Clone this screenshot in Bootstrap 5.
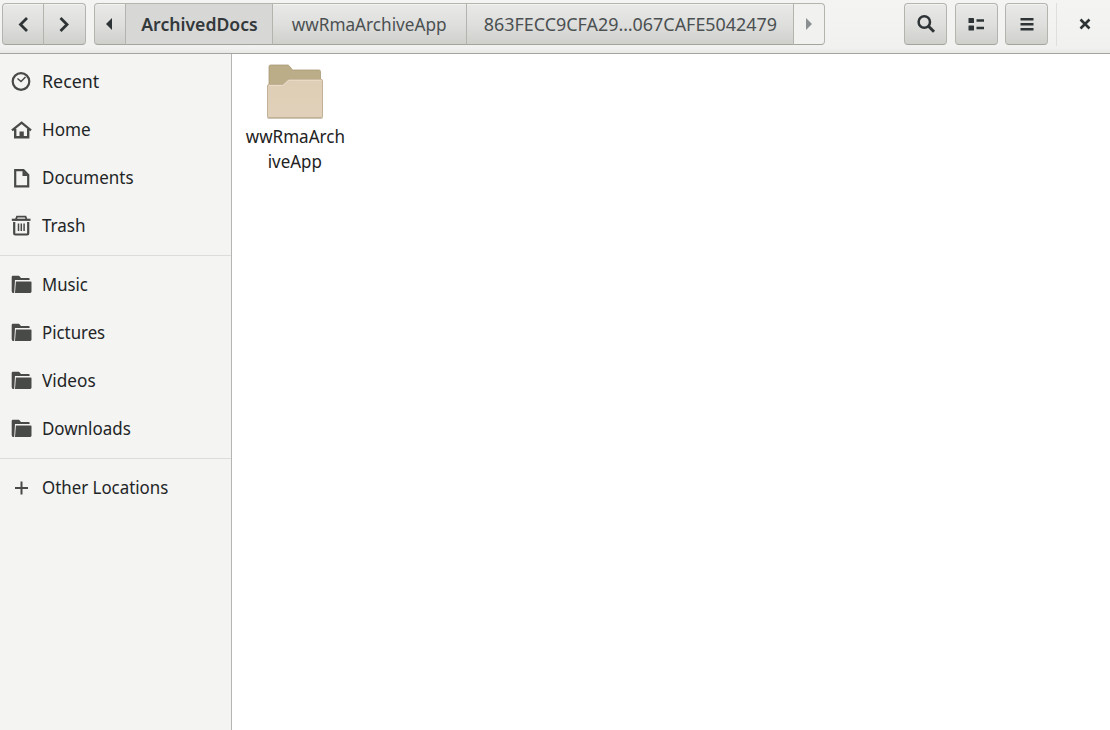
<!DOCTYPE html>
<html lang="en">
<head>
<meta charset="utf-8">
<title>ArchivedDocs</title>
<link href="https://cdn.jsdelivr.net/npm/bootstrap@5.3.0/dist/css/bootstrap.min.css" rel="stylesheet">
<style>
body{font-family:"Noto Sans","Open Sans",sans-serif;font-size:18px;line-height:25px;color:#222527;background:#fff}
.headerbar{height:54px;background:linear-gradient(#f4f4f3,#f1f1f0 48px,#e7e7e6 53px);border-bottom:1px solid #a5a5a0;padding:3px 0 0 2px}
.tool{height:42px;border:1px solid #b4b4af;border-bottom-color:#a4a49f;border-radius:4px;background:linear-gradient(#e9e9e8,#dfdfdd 50%,#cfcfcc);color:#2e3436;padding:0;box-shadow:inset 0 1px #f3f3f2}
.tool-sq{width:43px}
.btn-group>.tool+.tool{margin-left:-1px}
.crumb{font-size:18px;line-height:25px;color:#4b5052;white-space:nowrap}
.crumb.current{background:#d7d7d6;color:#33393b;font-weight:600;box-shadow:none}
.crumb.off{background:#f1f1f0;color:#8b8f8f;box-shadow:none}
.fit{display:inline-block;white-space:nowrap}
.places{width:232px;background:#f4f4f2;border-right:1px solid #b4b4b0;padding-top:3px}
.place{height:48px;padding-left:11px;gap:10px;color:#222527}
.place svg{color:#484a48;flex:none}
.place .fit{transform-origin:left}
.rule{height:1px;background:#dcdcd9;margin:6px 0 4px}
.vr-line{width:1px;height:43px;background:#dfdfdd;margin-left:8px}
.file{width:126px;padding-top:10px;color:#222}
.file-label{margin-top:1px}
</style>
</head>
<body class="vh-100 overflow-hidden d-flex flex-column">
<header class="headerbar d-flex align-items-start flex-shrink-0">
  <div class="btn-group">
    <button class="btn tool d-flex align-items-center justify-content-center" style="width:42px" aria-label="Back"><svg width="20" height="20" fill="none" stroke="currentColor" stroke-width="2.800"><path d="M14 4 7.500 10.500 14 17"/></svg></button>
    <button class="btn tool d-flex align-items-center justify-content-center" style="width:43px" aria-label="Forward"><svg width="20" height="20" fill="none" stroke="currentColor" stroke-width="2.800"><path d="m5.500 4 6.500 6.500L5.500 17"/></svg></button>
  </div>
  <div class="btn-group ms-2">
    <button class="btn tool d-flex align-items-center justify-content-center" style="width:32px" aria-label="Scroll left"><svg width="10" height="14"><path d="M7 1v12L1 7z" fill="currentColor"/></svg></button>
    <button class="btn tool crumb current" style="width:148px"><span class="fit" data-w="116">ArchivedDocs</span></button>
    <button class="btn tool crumb" style="width:195px"><span class="fit" data-w="154">wwRmaArchiveApp</span></button>
    <button class="btn tool crumb" style="width:328px"><span class="fit" data-w="293">863FECC9CFA29…067CAFE5042479</span></button>
    <button class="btn tool crumb off d-flex align-items-center justify-content-center" style="width:32px" aria-label="Scroll right"><svg width="10" height="14"><path d="M2 1v12L8 7z" fill="currentColor"/></svg></button>
  </div>
  <div class="d-flex ms-auto">
    <button class="btn tool tool-sq d-flex align-items-center justify-content-center" aria-label="Search"><svg width="20" height="20" fill="none" stroke="currentColor"><circle cx="8.300" cy="8" r="5.700" stroke-width="2.500"/><path d="m12.500 12.200 5.500 5.500" stroke-width="3"/></svg></button>
    <button class="btn tool tool-sq d-flex align-items-center justify-content-center ms-2" aria-label="View"><svg width="18" height="16" fill="currentColor"><rect x=".5" y="2" width="5.500" height="5" rx=".6"/><rect x=".5" y="9.500" width="5.500" height="5" rx=".6"/><path d="M8.500 3.300h7.500v2.500H8.500zM8.500 10.800h7.500v2.500H8.500z"/></svg></button>
    <button class="btn tool tool-sq d-flex align-items-center justify-content-center" style="margin-left:7px" aria-label="Menu"><svg width="14" height="14" fill="currentColor"><path d="M.5 1h13v2.500H.5zM.5 6h13v2.500H.5zM.5 11h13v2.500H.5z"/></svg></button>
    <div class="vr-line"></div>
    <button class="btn p-0 border-0 d-flex align-items-center justify-content-center" style="width:50px;height:42px;margin-left:3px" aria-label="Close"><svg width="12" height="12" stroke="#2e3436" stroke-width="2.600"><path d="m1.500 1.500 9 9m0-9-9 9"/></svg></button>
  </div>
</header>
<main class="d-flex flex-grow-1">
  <nav class="places flex-shrink-0">
    <div class="place d-flex align-items-center"><svg width="21" height="21" fill="none" stroke="currentColor"><circle cx="10" cy="10.500" r="8.300" stroke-width="2.200"/><path d="m6.500 7.500 3.500 3 4.500-4.500" stroke-width="1.500"/></svg><span class="fit" data-w="57">Recent</span></div>
    <div class="place d-flex align-items-center"><svg width="21" height="21" fill="none" stroke="currentColor"><path d="m1 11.300 9.600-7.600 9.400 7.600" stroke-width="2.300"/><path d="M4.200 10v8.200h13V10" stroke-width="2.400"/><path d="M8.500 18v-5.500h4.300V18" fill="currentColor" stroke="none"/></svg><span class="fit" data-w="48">Home</span></div>
    <div class="place d-flex align-items-center"><svg width="21" height="21" fill="none" stroke="currentColor"><path d="M4.200 3.200h8.300l4.700 4.700v11.400h-13z" stroke-width="2.200"/><path d="M11.500 3v6H17z" fill="currentColor" stroke="none"/></svg><span class="fit" data-w="91">Documents</span></div>
    <div class="place d-flex align-items-center"><svg width="21" height="21" fill="none" stroke="currentColor"><path d="M.8 4.800h18.700" stroke-width="2.200"/><path d="M5 4.200 6 1.600h8.500l1 2.600" stroke-width="1.800"/><path d="M3.200 7v11.500q0 1 1 1h12q1 0 1-1V7" stroke-width="2.200"/><path d="M7.500 8.500v7.500m2.800-7.500v7.500m2.800-7.500v7.500" stroke-width="1.500"/></svg><span class="fit" data-w="43">Trash</span></div>
    <div class="rule"></div>
    <div class="place d-flex align-items-center"><svg width="21" height="21"><use href="#dir"/></svg><span class="fit" data-w="45">Music</span></div>
    <div class="place d-flex align-items-center"><svg width="21" height="21"><use href="#dir"/></svg><span class="fit" data-w="63">Pictures</span></div>
    <div class="place d-flex align-items-center"><svg width="21" height="21"><use href="#dir"/></svg><span class="fit" data-w="53">Videos</span></div>
    <div class="place d-flex align-items-center"><svg width="21" height="21"><use href="#dir"/></svg><span class="fit" data-w="88">Downloads</span></div>
    <div class="rule"></div>
    <div class="place d-flex align-items-center"><svg width="21" height="21" stroke="currentColor" stroke-width="2"><path d="M4 11h13M10.500 4.500v13"/></svg><span class="fit" data-w="126">Other Locations</span></div>
  </nav>
  <section class="flex-grow-1 bg-white">
    <div class="file d-flex flex-column align-items-center">
      <svg width="60" height="59" class="d-block">
        <defs>
          <linearGradient id="front" x2="0" y2="1"><stop stop-color="#dfceb6"/><stop offset="1" stop-color="#e1d1ba"/></linearGradient>
          <symbol id="dir" viewBox="0 0 21 21"><path d="M.7 17V3q0-1.200 1.200-1.200H8L10 3.900h7.800q.8 0 .8 1v1.200H4L3.200 18.900H2Q.7 18.900.7 17z" fill="#484a48"/><path d="M4.900 7.500h14.800q.8 0 .8 1v8.700q0 1.900-1.700 1.900H4z" fill="#484a48"/></symbol>
        </defs>
        <path d="M2 53q0 2 2 2h52q2 0 2-2" fill="#cdc5b8"/>
        <path d="M4 22V3q0-1.500 1.500-1.500h17q1 0 1.700.8l3.300 4.200H54q1.500 0 1.500 1.500v14H4z" transform="translate(0 -.5)" fill="#bbad88" stroke="#aa9b76" stroke-width=".8"/>
        <path d="M2.500 22q0-1.500 1.500-1.500h13q1 0 1.700-.8l3.600-3.500q.8-.9 2-.9H56q1.500 0 1.500 1.500V52q0 1.500-1.500 1.500H4q-1.500 0-1.500-1.500z" fill="url(#front)" stroke="#c2b196"/>
        <path d="M4 21.500h13.500q1 0 1.700-.8l3.700-3.700q.6-.7 1.500-.7H56" fill="none" stroke="#e9dcc8"/>
      </svg>
      <div class="text-center file-label"><span class="fit" data-w="99">wwRmaArch</span><br><span class="fit" data-w="54">iveApp</span></div>
    </div>
  </section>
</main>
<script src="https://cdn.jsdelivr.net/npm/bootstrap@5.3.0/dist/js/bootstrap.bundle.min.js"></script>
<script>
document.querySelectorAll('.fit').forEach(function(el){
  el.style.transform='scaleX('+(Number(el.dataset.w)+.5)/el.offsetWidth+')';
});
</script>
</body>
</html>
